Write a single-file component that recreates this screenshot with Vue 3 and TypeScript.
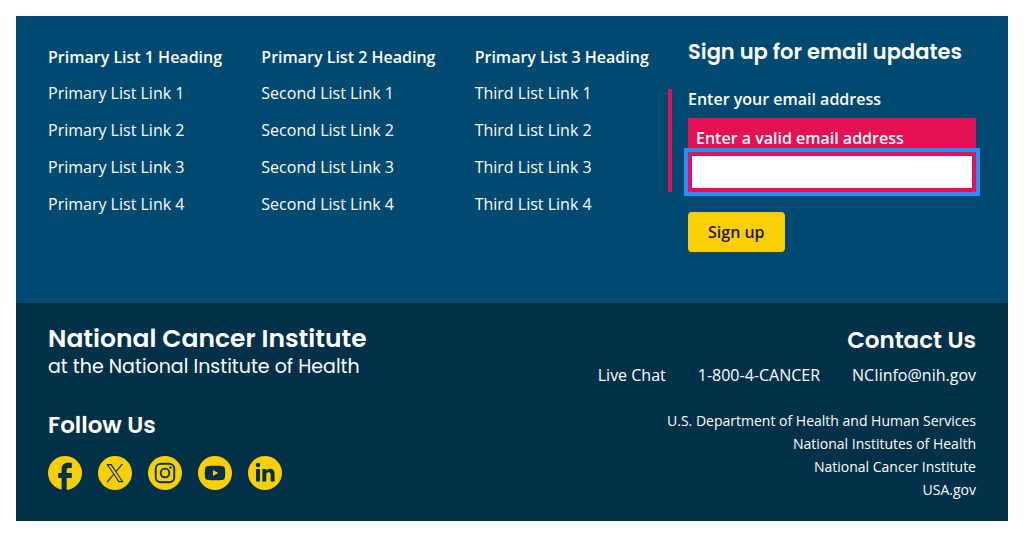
<script setup lang="ts">
interface ListGroup {
  heading: string
  links: string[]
}

interface SocialLink {
  name: string
  path: string
  transform?: string
}

const names: [string, string][] = [
  ['Primary List 1 Heading', 'Primary'],
  ['Primary List 2 Heading', 'Second'],
  ['Primary List 3 Heading', 'Third'],
]

const groups: ListGroup[] = names.map(([heading, prefix]) => ({
  heading,
  links: [1, 2, 3, 4].map((n) => `${prefix} List Link ${n}`),
}))

const contacts: string[] = ['Live Chat', '1-800-4-CANCER', 'NCIinfo@nih.gov']

const agencies: string[] = [
  'U.S. Department of Health and Human Services',
  'National Institutes of Health',
  'National Cancer Institute',
  'USA.gov',
]

const socials: SocialLink[] = [
  {
    name: 'Facebook',
    path: 'M10 22v-7H8v-3h2V9.5C10 7.57 11.57 6 13.5 6H16v3h-2c-.55 0-1 .45-1 1v2h3v3h-3v7z',
  },
  {
    name: 'X',
    transform: 'translate(6.9 6.7) scale(.0085 .0087)',
    path: 'M714.163 519.284L1160.89 0H1055.03L667.137 450.887L357.328 0H0L468.492 681.821L0 1226.37H105.866L515.491 750.218L842.672 1226.37H1200L714.137 519.284ZM569.165 687.828L521.697 619.934L144.011 79.694H306.615L611.412 515.685L658.88 583.579L1055.08 1150.3H892.476L569.165 687.854Z',
  },
  {
    name: 'Instagram',
    transform: 'translate(6 6) scale(.5)',
    path: 'M7 0h10a7 7 0 0 1 7 7v10a7 7 0 0 1-7 7H7a7 7 0 0 1-7-7V7a7 7 0 0 1 7-7zm0 2.2A4.8 4.8 0 0 0 2.2 7v10A4.8 4.8 0 0 0 7 21.8h10a4.8 4.8 0 0 0 4.8-4.8V7A4.8 4.8 0 0 0 17 2.2zM12 5.84a6.16 6.16 0 1 1 0 12.32 6.16 6.16 0 0 1 0-12.32zm0 2.16a4 4 0 1 0 0 8 4 4 0 0 0 0-8zm6.4-3.85a1.45 1.45 0 1 1 0 2.9 1.45 1.45 0 0 1 0-2.9z',
  },
  {
    name: 'YouTube',
    transform: 'translate(6 6) scale(.5)',
    path: 'M23.5 6.2a3 3 0 0 0-2.1-2.1C19.5 3.5 12 3.5 12 3.5s-7.5 0-9.4.6A3 3 0 0 0 .5 6.2C0 8.1 0 12 0 12s0 3.9.5 5.8a3 3 0 0 0 2.1 2.1c1.9.6 9.4.6 9.4.6s7.5 0 9.4-.6a3 3 0 0 0 2.1-2.1c.5-1.9.5-5.8.5-5.8s0-3.9-.5-5.8zM9.6 15.6V8.4l6.3 3.6z',
  },
  {
    name: 'LinkedIn',
    transform: 'translate(6.5 6) scale(.46)',
    path: 'M.5 8h5v16h-5zM3 0a2.9 2.9 0 1 1 0 5.8A2.9 2.9 0 0 1 3 0zM8.6 8h4.8v2.2h.1c.7-1.3 2.3-2.6 4.7-2.6 5 0 6 3.3 6 7.6V24h-5v-7.8c0-1.9 0-4.2-2.6-4.2s-3 2-3 4.1V24h-5z',
  },
]
</script>

<template>
  <footer class="footer">
    <section class="primary">
      <nav class="lists" aria-label="Footer navigation">
        <div v-for="group in groups" :key="group.heading">
          <h3 class="list-heading">{{ group.heading }}</h3>
          <ul class="links">
            <li v-for="link in group.links" :key="link"><a href="#">{{ link }}</a></li>
          </ul>
        </div>
      </nav>
      <form class="signup" novalidate @submit.prevent>
        <h3 class="signup-heading">Sign up for email updates</h3>
        <div class="field">
          <label for="email">Enter your email address</label>
          <span id="email-error" class="error">Enter a valid email address</span>
          <input id="email" type="email" aria-invalid="true" aria-describedby="email-error" />
        </div>
        <button type="submit">Sign up</button>
      </form>
    </section>
    <section class="secondary">
      <div>
        <div class="name">National Cancer Institute</div>
        <div class="parent">at the National Institute of Health</div>
        <h3 class="follow">Follow Us</h3>
        <div class="socials">
          <a v-for="s in socials" :key="s.name" href="#" :aria-label="s.name">
            <svg viewBox="2 2 20 20" aria-hidden="true">
              <circle cx="12" cy="12" r="10" fill="#fccf04" />
              <path :d="s.path" :transform="s.transform" fill="#003149" fill-rule="evenodd" />
            </svg>
          </a>
        </div>
      </div>
      <address class="contact">
        <h3 class="contact-heading">Contact Us</h3>
        <div class="contact-links">
          <a v-for="c in contacts" :key="c" href="#">{{ c }}</a>
        </div>
        <ul class="agencies">
          <li v-for="a in agencies" :key="a"><a href="#">{{ a }}</a></li>
        </ul>
      </address>
    </section>
  </footer>
</template>

<style>
body {
  margin: 0;
  background: #fff;
}
</style>

<style scoped>
.footer {
  margin: 16px;
  color: #fff;
  font-family: "Open Sans", "Noto Sans", sans-serif;
  font-size: 16px;
  line-height: 21px;
}
h3,
ul {
  margin: 0;
  padding: 0;
  list-style: none;
}
a {
  color: inherit;
  text-decoration: none;
}
.primary {
  display: grid;
  grid-template-columns: 20fr 9fr;
  padding: 24px 32px 51px;
  background: #004971;
}
.lists {
  display: grid;
  grid-template-columns: repeat(3, 1fr);
  align-content: start;
  padding-top: 7px;
}
.list-heading {
  font-size: 16px;
  font-weight: 600;
}
.links {
  display: grid;
  gap: 16px;
  margin-top: 15px;
}
.signup-heading,
.name,
.parent,
.follow,
.contact-heading {
  font-family: Poppins, "Open Sans", sans-serif;
  font-weight: 600;
}
.signup-heading {
  font-size: 21px;
  line-height: 24px;
}
.field {
  display: flex;
  flex-direction: column;
  margin: 25px 0 20px -20px;
  padding-left: 16px;
  border-left: 4px solid #e41154;
}
.field label {
  font-weight: 600;
  margin-bottom: 8px;
}
.error {
  padding: 10px 8px 3px;
  background: #e41154;
  font-weight: 600;
}
.field input {
  box-sizing: border-box;
  width: 100%;
  height: 40px;
  padding: 8px;
  border: 4px solid #e41154;
  border-radius: 0;
  outline: 4px solid #2491ff;
  background: #fff;
  font: inherit;
}
button {
  height: 40px;
  padding: 0 20px;
  border: 0;
  border-radius: 4px;
  background: #fccf04;
  color: #1b1b1b;
  font: inherit;
  font-weight: 600;
}
.secondary {
  display: flex;
  justify-content: space-between;
  padding: 20px 32px;
  background: #003149;
}
.name {
  font-size: 25px;
  line-height: 31px;
}
.parent {
  font-size: 19px;
  font-weight: 400;
  line-height: 26px;
}
.follow,
.contact-heading {
  font-size: 23px;
  line-height: 30px;
}
.follow {
  margin-top: 30px;
}
.socials {
  display: flex;
  gap: 16px;
  margin-top: 16px;
}
.socials svg {
  display: block;
  width: 34px;
  height: 34px;
}
.contact {
  padding-top: 2px;
  font-style: normal;
  text-align: right;
}
.contact-links {
  display: flex;
  justify-content: flex-end;
  gap: 32px;
  margin-top: 10px;
}
.agencies {
  margin-top: 23px;
  font-size: 14px;
  line-height: 23px;
}
</style>
